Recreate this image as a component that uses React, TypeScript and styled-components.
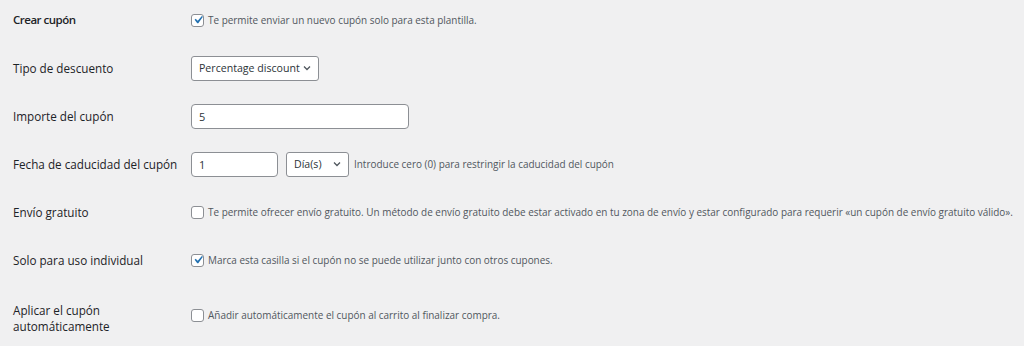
import React from "react";
import styled, { createGlobalStyle } from "styled-components";

const Global = createGlobalStyle`
  html, body { margin: 0; padding: 0; background: #f0f0f1; }
  body { font-family: "Open Sans", "Noto Sans", sans-serif; color: #1d2327; overflow: hidden; }
`;

const Form = styled.div`
  display: flex;
  flex-direction: column;
  margin-top: -4px;
`;

const Row = styled.div<{ $tall?: boolean }>`
  display: grid;
  grid-template-columns: 191px 1fr;
  align-items: center;
  height: ${(p) => (p.$tall ? 62 : 48)}px;
`;

const Label = styled.div<{ $bold?: boolean; $shift?: number }>`
  padding-left: 13px;
  font-size: ${(p) => (p.$bold ? 11.5 : 11.7)}px;
  letter-spacing: ${(p) => (p.$bold ? -0.5 : 0)}px;
  line-height: 16px;
  font-weight: ${(p) => (p.$bold ? 600 : 400)};
  color: #1d2327;
  margin-top: ${(p) => p.$shift ?? 0}px;
`;

const Field = styled.div`
  display: flex;
  align-items: center;
  gap: 5px;
  white-space: nowrap;
`;

const CheckLine = styled.label`
  display: flex;
  align-items: center;
  gap: 4px;
  white-space: nowrap;
`;

const Box = styled.span`
  width: 13px;
  height: 13px;
  box-sizing: border-box;
  border: 1px solid #8c8f94;
  border-radius: 3px;
  background: #fff;
  display: inline-flex;
  align-items: center;
  justify-content: center;
  flex: none;
  overflow: visible;
  svg { flex: none; margin: -2px; }
`;

const Desc = styled.span`
  font-size: 9.95px;
  color: #50575e;
  line-height: 14px;
`;

const Input = styled.div<{ $w: number }>`
  width: ${(p) => p.$w}px;
  height: 25px;
  box-sizing: border-box;
  border: 1px solid #8c8f94;
  border-radius: 4px;
  background: #fff;
  display: flex;
  align-items: center;
  padding-left: 7px;
  font-size: 11px;
  color: #2c3338;
`;

const Select = styled.div<{ $w: number }>`
  width: ${(p) => p.$w}px;
  height: 25px;
  box-sizing: border-box;
  border: 1px solid #8c8f94;
  border-radius: 3px;
  background: #fff;
  display: flex;
  align-items: center;
  justify-content: space-between;
  padding: 0 6px 0 7px;
  font-size: 10.6px;
  color: #2c3338;
`;

const Pair = styled.div`
  display: flex;
  align-items: center;
  gap: 8px;
`;

const Check = () => (
  <svg width="16" height="16" viewBox="0 0 20 20">
    <path d="M14.83 4.89l1.34.94-5.81 8.38H9.02L5.78 9.67l1.34-1.25 2.57 2.4z" fill="#2271b1" />
  </svg>
);

const Chevron = () => (
  <svg width="10" height="10" viewBox="0 0 20 20">
    <path d="M4 7l6 6 6-6" fill="none" stroke="#50575e" strokeWidth="2.6" />
  </svg>
);

const CheckField = ({ checked, text }: { checked?: boolean; text: string }) => (
  <CheckLine>
    <Box>{checked && <Check />}</Box>
    <Desc>{text}</Desc>
  </CheckLine>
);

export default function App() {
  return (
    <>
      <Global />
      <Form>
        <Row>
          <Label $bold>Crear cupón</Label>
          <Field>
            <CheckField checked text="Te permite enviar un nuevo cupón solo para esta plantilla." />
          </Field>
        </Row>
        <Row>
          <Label>Tipo de descuento</Label>
          <Field>
            <Select $w={128}>
              <span>Percentage discount</span>
              <Chevron />
            </Select>
          </Field>
        </Row>
        <Row>
          <Label>Importe del cupón</Label>
          <Field>
            <Input $w={218}>5</Input>
          </Field>
        </Row>
        <Row>
          <Label>Fecha de caducidad del cupón</Label>
          <Field>
            <Pair>
              <Input $w={87}>1</Input>
              <Select $w={63}>
                <span>Día(s)</span>
                <Chevron />
              </Select>
            </Pair>
            <Desc>Introduce cero (0) para restringir la caducidad del cupón</Desc>
          </Field>
        </Row>
        <Row>
          <Label>Envío gratuito</Label>
          <Field>
            <CheckField text="Te permite ofrecer envío gratuito. Un método de envío gratuito debe estar activado en tu zona de envío y estar configurado para requerir «un cupón de envío gratuito válido»." />
          </Field>
        </Row>
        <Row>
          <Label>Solo para uso individual</Label>
          <Field>
            <CheckField checked text="Marca esta casilla si el cupón no se puede utilizar junto con otros cupones." />
          </Field>
        </Row>
        <Row $tall>
          <Label $shift={6}>
            Aplicar el cupón
            <br />
            automáticamente
          </Label>
          <Field>
            <CheckField text="Añadir automáticamente el cupón al carrito al finalizar compra." />
          </Field>
        </Row>
      </Form>
    </>
  );
}
